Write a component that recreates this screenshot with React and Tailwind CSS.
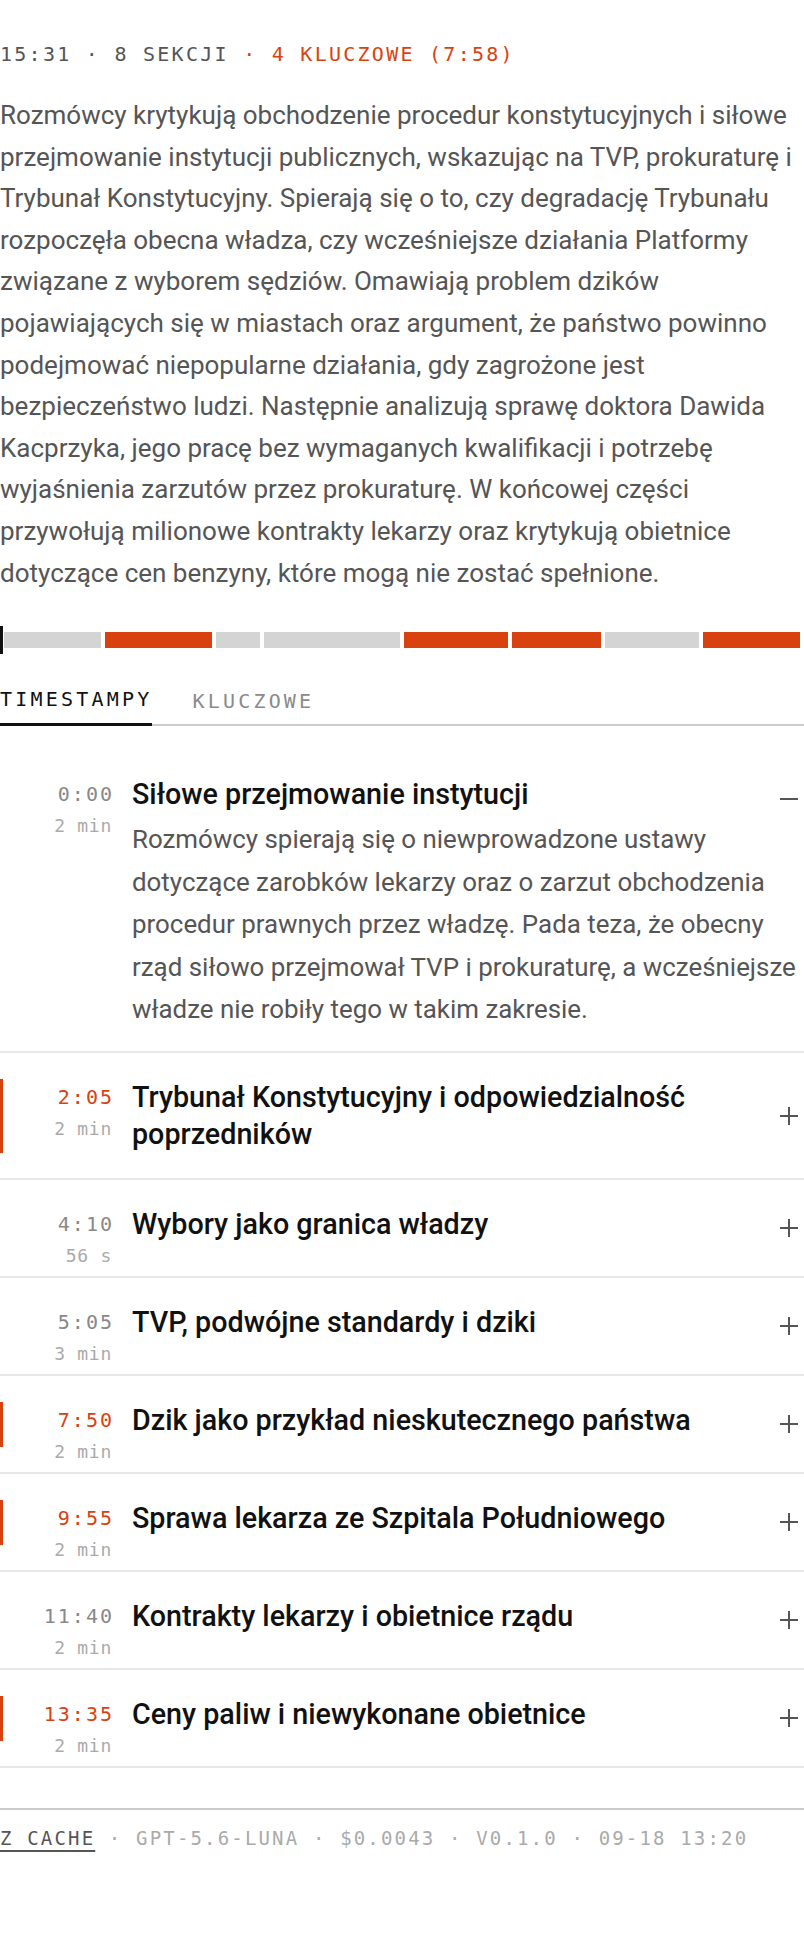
import React from 'react';

const sections = [
  {
    t: '0:00', d: '2 min', w: 97, key: false, open: true,
    title: 'Siłowe przejmowanie instytucji',
    desc: 'Rozmówcy spierają się o niewprowadzone ustawy dotyczące zarobków lekarzy oraz o zarzut obchodzenia procedur prawnych przez władzę. Pada teza, że obecny rząd siłowo przejmował TVP i prokuraturę, a wcześniejsze władze nie robiły tego w takim zakresie.',
  },
  { t: '2:05', d: '2 min', w: 107, key: true, title: 'Trybunał Konstytucyjny i odpowiedzialność poprzedników' },
  { t: '4:10', d: '56 s', w: 44, key: false, title: 'Wybory jako granica władzy' },
  { t: '5:05', d: '3 min', w: 135, key: false, title: 'TVP, podwójne standardy i dziki' },
  { t: '7:50', d: '2 min', w: 104, key: true, title: 'Dzik jako przykład nieskutecznego państwa' },
  { t: '9:55', d: '2 min', w: 89, key: true, title: 'Sprawa lekarza ze Szpitala Południowego' },
  { t: '11:40', d: '2 min', w: 94, key: false, title: 'Kontrakty lekarzy i obietnice rządu' },
  { t: '13:35', d: '2 min', w: 97, key: true, title: 'Ceny paliw i niewykonane obietnice' },
];

const mono = "font-['DejaVu_Sans_Mono',monospace]";

function Toggle({ open }) {
  return (
    <svg width="18" height="18" viewBox="0 0 18 18" className="block">
      <line x1="0" y1="9" x2="18" y2="9" stroke="#555" strokeWidth="2" />
      {!open && <line x1="9" y1="0" x2="9" y2="18" stroke="#555" strokeWidth="2" />}
    </svg>
  );
}

function Section({ s }) {
  return (
    <div className={`border-b-2 border-[#e8e8e8] pt-[26px] ${s.open ? 'pb-[20px]' : 'pb-[25px]'}`}>
      <div className="relative flex items-start">
        {s.key && <span className="absolute left-0 top-0 bottom-0 w-[3px] bg-[#d9420f]" />}
        <div className={`${mono} w-[114px] h-[45px] shrink-0 text-right`}>
          <div className={`text-[20px] leading-[37px] tracking-[0.1em] ${s.key ? 'text-[#d9420f]' : 'text-[#888]'}`}>
            {s.t}
          </div>
          <div className="text-[18px] leading-[20px] mt-[3px] pr-[2px] tracking-[0.04em] text-[#aaa]">{s.d}</div>
        </div>
        <h3 className="ml-[18px] flex-1 text-[28.7px] leading-[37px] font-medium text-[#111]">{s.title}</h3>
        <span className="self-center ml-4 mr-[6px]">
          <Toggle open={s.open} />
        </span>
      </div>
      {s.open && (
        <p className="pl-[132px] -mt-[3px] text-[25.9px] leading-[42.5px] text-[#555]">{s.desc}</p>
      )}
    </div>
  );
}

export default function App() {
  return (
    <div className="bg-white min-h-[1958px] w-[804px] pt-[40px] font-['Roboto',sans-serif]">
      <div className={`${mono} text-[20px] leading-[28px] tracking-[0.113em] uppercase text-[#555]`}>
        15:31 · 8 sekcji <span className="text-[#d9420f]">· 4 kluczowe (7:58)</span>
      </div>

      <p className="mt-[27px] text-[26px] leading-[41.6px] text-[#555]">
        Rozmówcy krytykują obchodzenie procedur konstytucyjnych i siłowe przejmowanie instytucji publicznych,
        wskazując na TVP, prokuraturę i Trybunał Konstytucyjny. Spierają się o to, czy degradację Trybunału
        rozpoczęła obecna władza, czy wcześniejsze działania Platformy związane z wyborem sędziów. Omawiają
        problem dzików pojawiających się w miastach oraz argument, że państwo powinno podejmować niepopularne
        działania, gdy zagrożone jest bezpieczeństwo ludzi. Następnie analizują sprawę doktora Dawida
        Kacprzyka, jego pracę bez wymaganych kwalifikacji i potrzebę wyjaśnienia zarzutów przez prokuraturę.
        W końcowej części przywołują milionowe kontrakty lekarzy oraz krytykują obietnice dotyczące cen
        benzyny, które mogą nie zostać spełnione.
      </p>

      <div className="relative mt-[38px] flex h-[16px] gap-[4px] pl-[4px] pr-[4px]">
        <span className="absolute left-0 -top-[6px] h-[28px] w-[3px] bg-[#111]" />
        {sections.map((s) => (
          <span
            key={s.t}
            className={`h-full ${s.key ? 'bg-[#d9420f]' : 'bg-[#d4d4d4]'}`}
            style={{ flexGrow: s.w, flexBasis: 0 }}
          />
        ))}
      </div>

      <div className={`${mono} mt-[37px] flex gap-[40px] border-b-2 border-[#cccccc] text-[20px] leading-[28px]`}>
        <button className="-mb-[2px] border-b-[3px] border-[#111] pb-[10px] uppercase tracking-[0.16em] text-[#111]">
          Timestampy
        </button>
        <button className="-mb-[2px] pb-[10px] uppercase tracking-[0.16em] text-[#8a8a8a]">Kluczowe</button>
      </div>

      <div className="mt-[24px]">
        {sections.map((s) => (
          <Section key={s.t} s={s} />
        ))}
      </div>

      <div className={`${mono} mt-[40px] border-t-2 border-[#cccccc] pt-[14px] text-[19px] leading-[28px] tracking-[0.114em] uppercase text-[#aaa]`}>
        <span className="text-[#555] underline decoration-2 underline-offset-[5px]">Z cache</span> · gpt-5.6-luna
        · $0.0043 · v0.1.0 · 09-18 13:20
      </div>
    </div>
  );
}
